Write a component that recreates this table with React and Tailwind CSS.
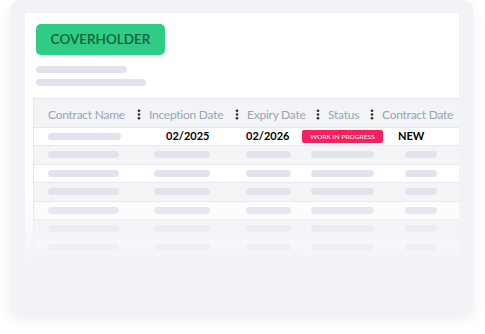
import React from "react";

const Dots = () => (
  <svg width="4" height="11" viewBox="0 0 4 11" className="shrink-0">
    <circle cx="2" cy="1.8" r="1.3" fill="#2b2f36" />
    <circle cx="2" cy="5.5" r="1.3" fill="#2b2f36" />
    <circle cx="2" cy="9.2" r="1.3" fill="#2b2f36" />
  </svg>
);

const Bar = ({ w }) => (
  <div className="h-[7px] rounded-full bg-[#e1e4ec]" style={{ width: w }} />
);

const font = { fontFamily: "Lato, 'Noto Sans', sans-serif" };

export default function App() {
  const rows = [1, 2, 3, 4, 5, 6];
  return (
    <div className="w-[485px] h-[334px] bg-white overflow-hidden" style={font}>
      <div className="ml-[10px] w-[463px] h-[314px] rounded-[10px] bg-[#f2f3f7] shadow-[0_6px_14px_rgba(0,0,0,0.07)] pt-[13px] pl-[15px] pr-[14px]">
        <div className="relative bg-white h-[250px] pt-[11px]">
          <div className="ml-[11px] w-[129px] h-[31px] rounded-[5px] bg-[#2ecc85] flex items-center justify-center text-[13.5px] font-semibold tracking-[0px] text-[#175e3c]">
            COVERHOLDER
          </div>
          <div className="ml-[11px] mt-[11px] w-[91px] h-[7px] rounded-full bg-[#e1e4ec]" />
          <div className="ml-[11px] mt-[6px] w-[110px] h-[7px] rounded-full bg-[#e1e4ec]" />
          <div className="ml-[8px] mt-[12px] border border-r-0 border-[#e3e7ee]">
            <div className="h-[29px] bg-[#f3f4f6] flex items-center pt-[3px] pl-[14px] gap-[8px] text-[12px] tracking-[-0.25px] text-[#97a3b8] border-b border-[#e3e7ee] whitespace-nowrap overflow-hidden">
              <span className="w-[81px] shrink-0">Contract Name</span>
              <Dots />
              <span className="w-[78px] shrink-0">Inception Date</span>
              <Dots />
              <span className="w-[61px] shrink-0">Expiry Date</span>
              <Dots />
              <span className="w-[34px] shrink-0">Status</span>
              <Dots />
              <span className="shrink-0">Contract Date</span>
            </div>
            <div className="h-[18px] grid grid-cols-[106px_92px_65px_94px_1fr] items-center pl-[14px] border-b border-[#e3e7ee] bg-white text-[11px] font-bold text-black whitespace-nowrap">
              <Bar w={73} />
              <span className="ml-[12px]">02/2025</span>
              <span>02/2026</span>
              <div className="-ml-[9px] w-[81px] h-[13px] rounded-[2px] bg-[#f3215f] flex items-center justify-center text-[6.5px] font-normal text-white tracking-[0.1px]">
                WORK IN PROGRESS
              </div>
              <span className="-ml-[7px]">NEW</span>
            </div>
            {rows.map((r) => (
              <div
                key={r}
                className={`h-[18.5px] grid grid-cols-[106px_92px_65px_94px_1fr] items-center pl-[14px] border-b border-[#e6e9f0] ${
                  r % 2 === 1 ? "bg-[#f5f5f7]" : "bg-white"
                }`}
              >
                <Bar w={71} />
                <Bar w={56} />
                <Bar w={45} />
                <Bar w={63} />
                <Bar w={32} />
              </div>
            ))}
          </div>
          <div className="absolute left-0 right-0 bottom-0 h-[70px] bg-gradient-to-b from-[#f3f4f8]/0 to-[#f3f4f8]" />
        </div>
      </div>
    </div>
  );
}
